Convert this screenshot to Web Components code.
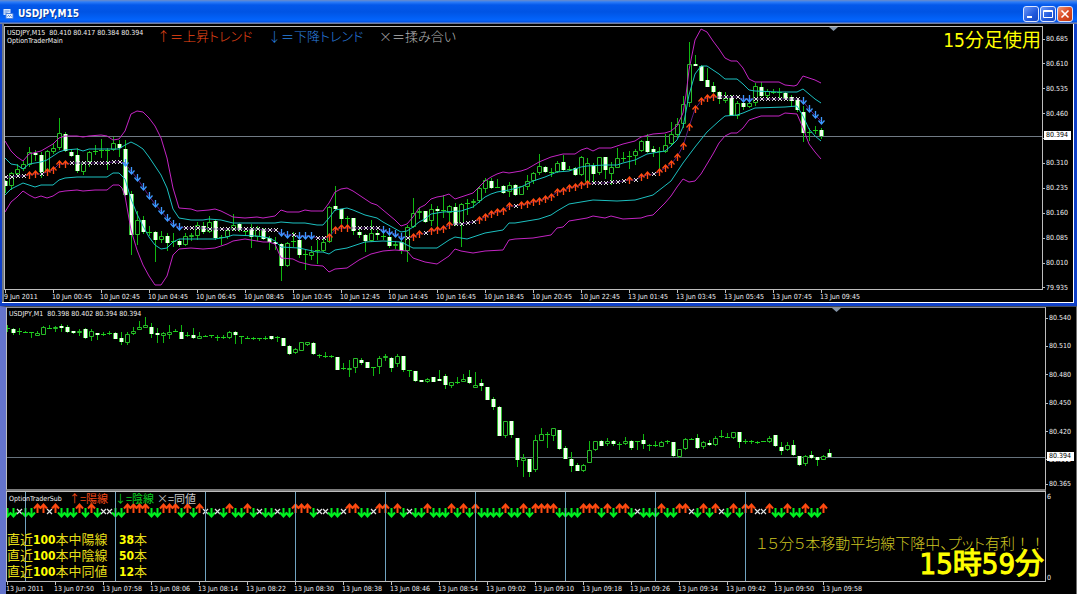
<!DOCTYPE html>
<html lang="ja">
<head>
<meta charset="utf-8">
<title>USDJPY,M15</title>
<style>
  body { margin: 0; background: #000; color: #f0f0f0; overflow: hidden;
    font-family: "DejaVu Sans Condensed", "Noto Sans", "Noto Sans CJK JP", sans-serif; font-size: 7px; line-height: 8px; }
</style>
</head>
<body>
<trading-desk></trading-desk>

<script>
const UP = "#ff4a10", DOWN = "#3c98ff", LIME = "#00f020";

function define(name, html, setup) {
  const tpl = document.createElement("template");
  tpl.innerHTML = html;
  customElements.define(name, class extends HTMLElement {
    constructor() {
      super();
      this.attachShadow({ mode: "open" }).append(tpl.content.cloneNode(true));
    }
    connectedCallback() { if (setup) setup(this, this.shadowRoot); }
  });
}

/* Candle rows: high,top,bottom,low and d (bearish) or u (bullish); no letter means a doji. */
const M15 = `180,181,186,193,d 172,173,186,190,u 164,169,174,177,u 161,164,169,171,u 147,152,165,167,u 150,153,155,161,d 152,155,172,178,d 150,151,171,172,u 144,148,152,154,u 118,133,148,150,u
132,134,151,152,d 149,152,156,157,d 148,155,171,173,d 162,162,172,175,u 151,152,162,167,u 145,151,152,155 139,150,151,158 148,150,151,170 137,143,150,151,u 140,144,148,157,d
140,149,195,196,d 191,194,235,255,d 211,220,235,245,u 216,220,232,234,d 226,232,233,236 231,232,240,262,d 231,236,240,243,u 233,236,243,251,d 233,241,242,247 239,241,245,247,d
233,236,245,246,u 233,235,237,241,u 222,225,236,240,u 222,226,232,234,d 216,222,232,233,u 219,221,238,240,d 235,237,238,245 228,230,237,239,u 214,225,230,231,u 223,224,230,232,d
231,231,232,236 224,229,237,248,d 226,228,237,241,u 228,229,239,240,d 236,238,242,250,d 237,242,244,250,d 243,244,266,281,d 242,243,266,267,u 232,241,242,247 237,240,255,258,d
249,254,255,270 246,252,256,260,u 240,250,251,264 239,242,251,252,u 206,207,242,243,u 186,206,209,211,d 209,209,219,224,d 216,218,219,226 218,218,231,235,d 227,232,235,238,d
234,235,241,252,d 220,233,241,242,u 230,233,235,240,d 228,236,237,240 233,237,246,248,d 241,244,246,249,u 237,242,251,254,d 225,227,251,262,u 198,213,227,228,u 208,211,213,219,u
211,211,222,223,d 204,209,221,226,u 206,209,211,227,d 195,210,211,218 205,206,213,222,u 203,207,225,226,d 203,204,224,247,u 199,203,204,215 199,201,203,208,u 187,188,201,203,u
178,180,189,193,u 178,181,188,189,d 179,187,188,188 185,186,193,194,d 182,185,192,197,u 184,185,195,196,d 186,186,195,195,u 175,181,187,190,u 172,173,181,184,u 154,166,173,175,u
166,167,172,173,d 168,172,173,177 161,163,172,173,u 155,162,170,171,d 166,169,170,171 167,168,175,176,d 156,157,175,176,u 158,163,182,183,u 163,165,174,182,d 157,157,173,175,u
157,157,170,179,d 162,167,174,185,u 148,158,168,168,u 152,158,159,162 151,156,157,169 149,151,156,165,u 140,141,151,152,u 134,141,152,153,d 146,149,152,157,d 147,151,152,171
134,145,152,153,u 122,134,144,146,u 118,124,135,138,u 96,104,124,128,u 42,64,103,107,u 55,64,66,66,d 65,66,81,81,d 68,80,87,87,d 82,86,92,93,d 91,92,99,104,d
92,98,101,103,u 95,98,116,116,d 101,103,116,119,u 101,103,107,110,d 102,103,107,108,u 83,86,103,106,u 82,87,96,97,d 89,91,96,99,u 89,92,93,94 88,92,93,99
92,93,99,100,d 95,97,101,107,d 99,100,110,112,d 106,112,133,142,d 128,132,133,141 126,130,131,134 128,130,136,139,d`;

const M1 = `325,328,329,332 328,329,333,335,d 328,331,332,335 331,332,333,333 332,332,333,338 331,333,336,336,u 326,327,335,335,u 325,328,329,329 326,327,329,332,u 324,326,328,332,d
325,327,332,333,d 331,331,333,334,d 329,331,333,336,u 328,329,338,339,d 329,331,337,341,u 333,333,335,340,d 332,334,335,336 331,333,334,335 332,333,339,339,d 332,338,342,345,d
332,334,343,345,u 327,331,334,335,u 321,327,330,330,u 317,325,328,328,u 323,327,334,338,d 328,333,335,343,d 332,333,336,343,u 325,332,335,339,u 329,331,332,332 325,332,339,339,d
332,335,336,337 328,335,338,339,d 332,336,339,339,u 335,336,336,337 335,335,336,338 335,337,338,341 335,337,338,339 331,332,338,339,u 331,332,335,344,d 336,336,337,344
336,338,339,339 337,338,339,340 338,338,339,341 336,338,339,340 336,336,339,340,d 336,337,338,342 338,338,346,346,d 345,346,354,355,d 348,349,353,354,u 342,342,351,351,u
342,342,345,346,u 342,343,354,355,d 354,355,356,358 352,356,357,358 355,356,357,358 357,357,370,370,d 363,368,369,370 360,368,370,377,u 358,358,368,373,u 358,360,363,365,d
362,362,368,368,d 367,367,368,376 356,358,367,374,u 354,356,358,361,u 357,358,368,372,d 354,356,364,367,u 356,356,370,372,d 370,370,371,377 371,371,381,382,d 380,380,382,382,d
378,379,382,383,u 377,377,382,382,d 370,379,381,381,d 374,376,385,389,d 382,382,386,388,u 377,382,383,384 374,379,382,382,u 370,377,383,384,d 372,385,388,388,u 379,383,386,391,d
387,387,400,400,d 397,399,407,410,d 406,407,436,436,d 421,421,436,438,u 421,421,435,438,d 438,438,460,467,d 454,458,461,477,u 459,459,472,477,d 435,440,470,472,u 428,434,441,441,u
432,434,435,448 428,428,436,441,u 430,430,449,450,d 446,448,459,459,d 452,459,466,472,d 463,465,471,471,d 464,465,471,472,u 441,450,463,463,u 441,441,450,451,u 440,441,446,446,d
438,441,444,446,u 440,441,444,446,d 442,444,445,450 437,441,444,445,u 440,441,448,450,d 441,441,442,450 434,440,444,449,d 444,445,446,451 441,445,446,447 441,442,447,447,u
440,441,442,444 442,442,456,457,d 449,449,457,458,u 438,439,449,450,u 438,439,440,440 434,438,448,449,d 441,442,447,449,u 440,443,445,446,d 436,438,445,446,u 430,436,437,438
433,437,438,438 432,432,438,439,u 432,432,442,448,d 439,441,442,444 440,441,442,444 441,442,443,444 441,441,442,442 436,438,442,443,u 435,435,446,447,d 442,447,451,455,d
442,445,450,451,u 440,445,455,456,d 456,456,465,466,d 455,456,464,466,u 451,455,458,459,d 457,457,460,466,d 455,456,460,460,u 449,453,457,457,d`;

const BANDS = [
  ["#c424c4", "5,141 11,151 17,157 23,161 29,154 41,151 53,144 59,138 65,136 77,136 83,137 89,136 101,135 107,136 113,140 119,139 125,131 131,114 137,111 143,112 149,118 155,126 161,138 167,158 173,188 179,208 191,209 197,211 209,210 215,209 221,211 227,214 233,217 245,218 257,217 263,218 275,216 281,210 287,212 299,212 305,210 311,211 323,211 329,203 335,192 341,189 347,188 353,191 359,195 365,199 371,203 377,205 383,210 389,215 395,220 401,226 407,224 413,217 419,208 425,205 431,199 437,197 443,196 449,194 455,199 461,197 467,195 473,193 479,187 485,181 491,177 497,174 503,172 509,173 515,172 521,171 527,169 539,162 551,157 563,154 575,154 581,150 587,148 593,151 599,148 611,148 623,144 635,141 641,137 653,134 665,133 671,131 677,126 683,113 686,95 689,70 695,40 701,29 707,32 713,41 719,49 725,58 731,61 737,61 743,68 749,79 755,82 779,82 785,85 794,86 797,85 803,76 809,78 815,80 821,83"],
  ["#c424c4", "5,212 11,202 17,197 23,191 29,195 35,198 41,196 47,198 53,196 59,192 65,191 77,190 83,191 95,190 107,190 113,185 119,185 122,188 125,196 131,230 137,250 143,265 149,276 155,285 161,285 167,276 173,255 179,249 191,248 203,249 215,248 221,246 227,244 233,241 245,239 257,241 263,242 269,242 275,244 281,258 293,259 299,262 311,265 323,266 329,272 335,269 347,268 353,264 359,260 365,257 371,254 383,251 395,250 407,251 413,258 419,260 425,262 437,264 443,260 449,256 455,249 461,251 473,253 485,251 503,250 509,240 515,239 533,238 551,235 557,228 563,227 569,221 587,218 593,216 605,218 611,216 623,219 641,218 647,216 653,215 659,209 665,203 671,196 677,187 683,179 689,182 695,181 701,174 713,154 719,143 725,136 731,133 737,133 743,128 749,120 755,118 761,116 779,116 785,113 797,114 803,128 809,144 815,152 821,159"],
  ["#1cc0c0", "5,158 11,164 17,165 23,169 29,164 41,162 47,160 53,156 59,152 65,150 77,149 83,151 89,149 119,149 125,145 131,142 137,145 143,149 149,157 155,166 161,175 167,188 173,209 179,218 191,220 203,220 209,219 221,220 233,223 275,223 281,222 293,223 305,223 317,225 323,225 329,218 335,210 341,209 347,208 353,210 365,215 377,218 383,222 401,232 407,231 413,227 419,222 425,219 431,214 443,212 461,211 473,207 479,202 485,197 491,194 497,192 509,190 521,187 533,181 545,177 557,172 569,171 581,167 587,166 605,165 617,165 623,163 635,160 647,154 665,151 671,146 677,140 683,127 689,95 695,74 701,66 707,66 713,70 719,74 725,79 737,79 743,84 749,90 755,91 779,92 797,92 803,89 809,94 815,99 821,103"],
  ["#1cc0c0", "5,195 11,189 17,186 23,183 29,185 35,187 41,185 53,185 59,180 65,178 77,177 107,177 113,173 119,173 125,179 131,199 137,214 143,226 149,237 155,245 161,249 167,248 173,242 179,239 215,239 227,237 233,235 257,236 269,238 275,241 281,247 299,248 317,252 323,252 329,254 335,250 347,248 359,244 365,242 383,241 401,242 413,248 437,248 443,244 449,240 455,237 467,239 479,235 485,233 491,232 503,230 509,223 515,223 527,221 539,219 551,215 557,211 569,204 593,200 617,201 635,200 653,195 671,181 683,163 695,147 707,132 719,121 725,116 737,115 743,113 755,108 785,107 797,106 803,116 809,129 815,136 821,141"]
];

/* Trend markers, one per M15 candle: U, D or X with the y of the average line. */
const TREND = "X177 X177 X176 X176 U175 U174 X174 U172 U170 U164 U164 X163 X163 X163 X163 X163 X163 X163 X162 X162 D163 D171 D178 D187 D196 D204 D211 D218 D224 D227 X228 X228 X228 X228 X229 X229 X229 X229 X229 X229 X229 X229 X229 X230 X230 X230 D233 D235 X235 D236 D236 D236 X238 X238 U237 U230 U228 U228 X228 X228 X228 X228 X228 D230 D232 D234 D237 X238 U237 U234 X233 U231 U230 U229 U225 X224 X224 X223 X222 U220 U217 U214 U212 U211 U206 X206 U205 U204 U202 U201 U199 U197 U192 U191 U188 U187 U185 U184 X183 X183 X183 X182 X182 X181 U180 X180 U177 U175 X174 U172 U168 U164 U157 U146 U127 U109 U101 U98 U97 X97 X97 X97 X97 D99 D99 X99 X99 X99 X99 X99 X99 X99 X99 D101 D109 D115 D121";

const RESULTS = "DDXDDUUXUDDDUDUDXXDDUUUUDDUUUDUDUXDXDUDDUDXDDXDD"
  + "UUUDXXDDXUUDDXUUDUDXDDUDDDUDUDUDDDDUDDUDUUUUDDDD"
  + "UUUDUDUUDXDDDUDDUUXDUDUXDUDUUXXUDDUDDUDDU";

function candles(data, x0) {
  return data.split(/\s+/).map((row, i) => {
    const [h, t, b, l, kind] = row.split(",");
    const x = x0 + 6 * i, height = Math.max(b - t, 1);
    const wick = (a, z) => z > a ? `<rect x="${x}" y="${a}" width="1" height="${z - a}" fill="#10b810"/>` : "";
    const wicks = wick(+h, +t) + wick(+b, +l);
    if (kind === "u") return wicks + `<path d="M${x - 1.5} ${+t + .5}h4v${height - 1}h-4z" fill="#000" stroke="#28bc28"/>`;
    if (kind === "d") return wicks + `<rect x="${x - 2}" y="${t}" width="5" height="${height}" fill="#34c034"/><rect x="${x - 1}" y="${t}" width="3" height="${height}" fill="#f4fff0"/>`;
    return wicks + `<rect x="${x - 2}" y="${t}" width="5" height="1" fill="#20d020"/>`;
  }).join("");
}

function trendMark(kind, x, y) {
  if (kind === "X") return `<path d="M${x - 1} ${y - 2}l4 4m0-4l-4 4" stroke="#dcdcdc" fill="none"/>`;
  return kind === "U"
    ? `<path d="M${x + .5} ${y + 4}v-7m-3 3.5l3-3.5l3 3.5" stroke="${UP}" stroke-width="1.3" fill="none"/>`
    : `<path d="M${x + .5} ${y - 4}v7m-3-3.5l3 3.5l3-3.5" stroke="${DOWN}" stroke-width="1.3" fill="none"/>`;
}

function resultMark(kind, x) {
  if (kind === "X") return `<path d="M${x - 2} 509l5 5m0-5l-5 5" stroke="#e4e4e4" stroke-width="1.2" fill="none"/>`;
  return kind === "U"
    ? `<path d="M${x + .5} 513v-9m-3.500 4.500l3.500-4l3.500 4" stroke="${UP}" stroke-width="2" fill="none"/>`
    : `<path d="M${x + .5} 508v9m-3.500-4.500l3.500 4l3.500-4" stroke="${LIME}" stroke-width="2" fill="none"/>`;
}

const drawings = {
  m15() {
    const marks = TREND.split(" ").map((m, i) => [m[0], 5 + 6 * i, +m.slice(1)]);
    return `<g transform="translate(-5 -27)">
      <rect x="5" y="136" width="100%" height="1" fill="#707a84"/>
      ${candles(M15, 5)}
      <polyline points="${marks.map(m => m[1] + "," + m[2]).join(" ")}" fill="none" stroke="#5a1c80"/>
      ${BANDS.map(([c, p]) => `<polyline points="${p}" fill="none" stroke="${c}"/>`).join("")}
      ${marks.map(m => trendMark(...m)).join("")}
      <path d="M829 27h9l-4.500 4z" fill="#8494a8"/></g>`;
  },
  m1() {
    return `<g transform="translate(-7 -308)">
      <rect x="7" y="457" width="100%" height="1" fill="#66727c"/>
      ${candles(M1, 7)}
      <path d="M832 308h9l-4.500 4z" fill="#8494a8"/></g>`;
  },
  sub() {
    let lines = "";
    for (let x = 25; x < 760; x += 90) lines += `<rect x="${x}" y="492" width="1" height="90" fill="#70a4c0"/>`;
    return `<g transform="translate(-7 -492)">${[...RESULTS].map((k, i) => resultMark(k, 7 + 6 * i)).join("")}${lines}</g>`;
  }
};

define("chart-plot", `
<style>
  :host { display: block; position: relative; overflow: hidden; min-width: 0; background: #000;
    border: 1px solid #bdbdbd; height: var(--plot-height); }
  svg { display: block; width: 100%; height: 100%; }
  .overlay { position: absolute; inset: 0; }
</style>
<svg aria-hidden="true"></svg><div class="overlay"><slot></slot></div>`,
  (el, root) => { root.querySelector("svg").innerHTML = drawings[el.getAttribute("series")](); });

define("price-axis", `
<style>
  :host { display: block; position: relative; height: var(--axis-height); }
  ul { list-style: none; margin: 0; padding: var(--axis-start) 0 0; height: var(--axis-span);
    display: flex; flex-direction: column; justify-content: space-between; }
  li { display: flex; align-items: center; gap: 1px; height: 8px; white-space: nowrap; }
  li::before { content: ""; width: 2px; height: 1px; background: #bdbdbd; }
  .bid { position: absolute; left: 1px; right: 2px; top: var(--bid); height: 9px; line-height: 9px;
    padding-left: 2px; background: #fff; color: #000; }
</style>
<ul></ul><div class="bid"></div>`,
  (el, root) => {
    root.querySelector("ul").innerHTML = el.getAttribute("values").split(" ").map(v => `<li>${v === "-" ? "" : v}</li>`).join("");
    root.querySelector(".bid").textContent = el.getAttribute("bid");
  });

define("time-axis", `
<style>
  :host { display: block; min-width: 0; }
  ol { list-style: none; margin: 0; padding: 0; display: flex; height: 12px; }
  li { flex: 0 0 48px; white-space: nowrap; }
  li::before { content: ""; display: block; width: 1px; height: 3px; margin-left: 1px; background: #bdbdbd; }
</style>
<ol></ol>`,
  (el, root) => {
    root.querySelector("ol").innerHTML = el.getAttribute("values").split(",").map(v => `<li>${v}</li>`).join("");
  });

define("title-bar", `
<style>
  :host { display: flex; align-items: center; gap: 4px; height: 24px; box-sizing: border-box; padding: 4px 4px 1px 3px;
    background: linear-gradient(#6c8cc8 0, #2c7cf8 2px, #0458ea 5px, #0054e4 12px, #0364fc 20px, #0150e0 22px, #7c8cc0 23px, #68707c 24px); }
  h1 { flex: 1; margin: 0; font: bold 10px/16px "DejaVu Sans Condensed", "Noto Sans", sans-serif; color: #fff; text-shadow: 1px 1px #0c3c98; }
  .tools { display: flex; gap: 1px; }
  button { width: 16px; height: 16px; padding: 0; border: 1px solid #dce6ff; border-radius: 3px;
    background: linear-gradient(135deg, #6c98f8, #2058dc 60%, #1848c0); }
  button.close { background: linear-gradient(135deg, #f09878, #dc4c24 50%, #c03810); }
  svg { display: block; }
</style>
<svg width="11" height="12" viewBox="0 0 10 12" aria-hidden="true"><path d="M0 1h7v6H0z" fill="#d8e8ff"/><path d="M1 3h5M1 5h3" stroke="#5a8ce0"/><path d="M2.500 5.500h7v5h-7z" fill="#e8f2ff" stroke="#4a80dc"/><path d="M4 8.500l1-1l1 1l1-1l1 1" stroke="#3a70cc" fill="none"/></svg>
<h1><slot></slot></h1>
<div class="tools">
  <button aria-label="最小化"><svg width="14" height="14"><path d="M3 10h5" stroke="#fff" stroke-width="2"/></svg></button>
  <button aria-label="最大化"><svg width="14" height="14"><path d="M2.500 3.500h9v7h-9zM2.500 4.500h9" stroke="#fff" fill="none"/></svg></button>
  <button class="close" aria-label="閉じる"><svg width="14" height="14"><path d="M3.500 3.500l7 7m0-7l-7 7" stroke="#fff" stroke-width="1.600"/></svg></button>
</div>`);

define("main-window", `
<style>
  :host { display: block; background: #000; }
  .frame { border: solid #1040c8; border-width: 0 3px 3px 2px; }
  .inner { border: solid #fff; border-width: 0 1px 1px 0; padding-top: 2px; padding-left: 2px;
    display: grid; grid-template-columns: minmax(0, 1fr) 30px;
    background: linear-gradient(90deg, #707884 2px, #000 2px); }
  chart-plot { --plot-height: 262px; }
  price-axis { --axis-height: 264px; --axis-start: 9px; --axis-span: 257px; --bid: 105px; }
  .head { display: flex; align-items: flex-start; }
  .info { width: 152px; padding: 2px 0 0 2px; box-sizing: border-box; white-space: pre; }
  .key { width: 111px; font-size: 13px; line-height: 18px; font-weight: 300;
    font-family: "Noto Sans CJK JP", sans-serif; font-feature-settings: "palt"; white-space: nowrap; }
  .up { color: #f04818; } .down { color: #2c80e0; } .flat { color: #b4b4b4; }
  .note { margin-left: auto; padding-right: 1px; font: 19px/27px "DejaVu Sans Condensed", "Noto Sans CJK JP", sans-serif; color: #ff0; white-space: nowrap; }
</style>
<title-bar>USDJPY,M15</title-bar>
<div class="frame"><div class="inner">
  <chart-plot series="m15"><div class="head">
    <div class="info">USDJPY,M15  80.410 80.417 80.384 80.394<br>OptionTraderMain</div>
    <span class="key up">↑＝上昇トレンド</span><span class="key down">↓＝下降トレンド</span><span class="key flat">×＝揉み合い</span>
    <span class="note">15分足使用</span>
  </div></chart-plot>
  <price-axis bid="80.394" values="80.685 80.610 80.535 80.460 - 80.310 80.235 80.160 80.085 80.010 79.935"></price-axis>
  <time-axis values="9 Jun 2011,10 Jun 00:45,10 Jun 02:45,10 Jun 04:45,10 Jun 06:45,10 Jun 08:45,10 Jun 10:45,10 Jun 12:45,10 Jun 14:45,10 Jun 16:45,10 Jun 18:45,10 Jun 20:45,10 Jun 22:45,13 Jun 01:45,13 Jun 03:45,13 Jun 05:45,13 Jun 07:45,13 Jun 09:45"></time-axis>
</div></div>`);

define("signal-window", `
<style>
  :host { display: grid; grid-template-columns: minmax(0, 1fr) 30px; border: solid; border-width: 1px 1px 0 6px;
    border-color: #404858 #707070 #000 #6474cc; background: #000; }
  .price { --plot-height: 181px; border-top-color: #8c8c94; border-bottom: 2px solid #7c7c7c; }
  .signals { --plot-height: 89px; }
  .main { --axis-height: 184px; --axis-start: 7px; --axis-span: 150px; --bid: 145px; }
  .low { display: flex; align-items: center; gap: 1px; height: 8px; margin-top: -11px; }
  .low::before { content: ""; width: 2px; height: 1px; background: #bdbdbd; }
  .range { display: flex; flex-direction: column; justify-content: space-between; padding: 2px 0 0 1px; }
  .info { padding: 2px; white-space: pre; }
  .head { display: flex; height: 13px; align-items: center; padding-left: 2px; white-space: nowrap; }
  .name { width: 60px; }
  .key { width: 46px; font-size: 11px; line-height: 13px; font-family: "Noto Sans CJK JP", sans-serif; }
  .up { color: #f04818; } .down { color: #08d020; width: 42px; } .flat { color: #c8c8c8; }
  .foot { display: flex; justify-content: space-between; align-items: flex-start; padding-top: 27px; color: #ff0; }
  dl { margin: 0; display: grid; grid-template-columns: 112px auto; font: 13px/15px "Liberation Sans", "Noto Sans CJK JP", sans-serif; color: #e4dc18; white-space: nowrap; }
  dt, dd { margin: 0; }
  b { font: bold 12px/15px "DejaVu Sans Condensed", "Noto Sans", sans-serif; color: #ff0; }
  .alert { text-align: right; white-space: nowrap; }
  p { margin: 2px 0 0; font: 300 15px/17px "Noto Sans CJK JP", sans-serif; font-feature-settings: "palt"; color: #ccc420; }
  p span { font-feature-settings: normal; }
  time { display: block; font: 29px/27px "DejaVu Sans Condensed", "Noto Sans CJK JP", sans-serif; color: #ff0;
    -webkit-text-stroke: 1px #ff0; padding-right: 1px; }
</style>
<chart-plot class="price" series="m1"><div class="info">USDJPY,M1  80.398 80.402 80.394 80.394</div></chart-plot>
<div class="axis">
  <price-axis class="main" bid="80.394" values="80.540 80.510 80.480 80.450 80.420 80.390"></price-axis>
  <div class="low">80.365</div>
</div>
<chart-plot class="signals" series="sub">
  <div class="head"><span class="name">OptionTraderSub</span><span class="key up">↑=陽線</span><span class="key down">↓=陰線</span><span class="key flat">×=同値</span></div>
  <div class="foot">
    <dl><dt>直近<b>100</b>本中陽線</dt><dd><b>38</b>本</dd><dt>直近<b>100</b>本中陰線</dt><dd><b>50</b>本</dd><dt>直近<b>100</b>本中同値</dt><dd><b>12</b>本</dd></dl>
    <div class="alert"><p>１５分５本移動平均線下降中、プット有利<span>！！</span></p><time>15時59分</time></div>
  </div>
</chart-plot>
<div class="range"><span>6</span><span>0</span></div>
<time-axis values="13 Jun 2011,13 Jun 07:50,13 Jun 07:58,13 Jun 08:06,13 Jun 08:14,13 Jun 08:22,13 Jun 08:30,13 Jun 08:38,13 Jun 08:46,13 Jun 08:54,13 Jun 09:02,13 Jun 09:10,13 Jun 09:18,13 Jun 09:26,13 Jun 09:34,13 Jun 09:42,13 Jun 09:50,13 Jun 09:58"></time-axis>`);

define("trading-desk", `
<style>:host { display: flex; flex-direction: column; }</style>
<main-window></main-window><signal-window></signal-window>`);
</script>
</body>
</html>
